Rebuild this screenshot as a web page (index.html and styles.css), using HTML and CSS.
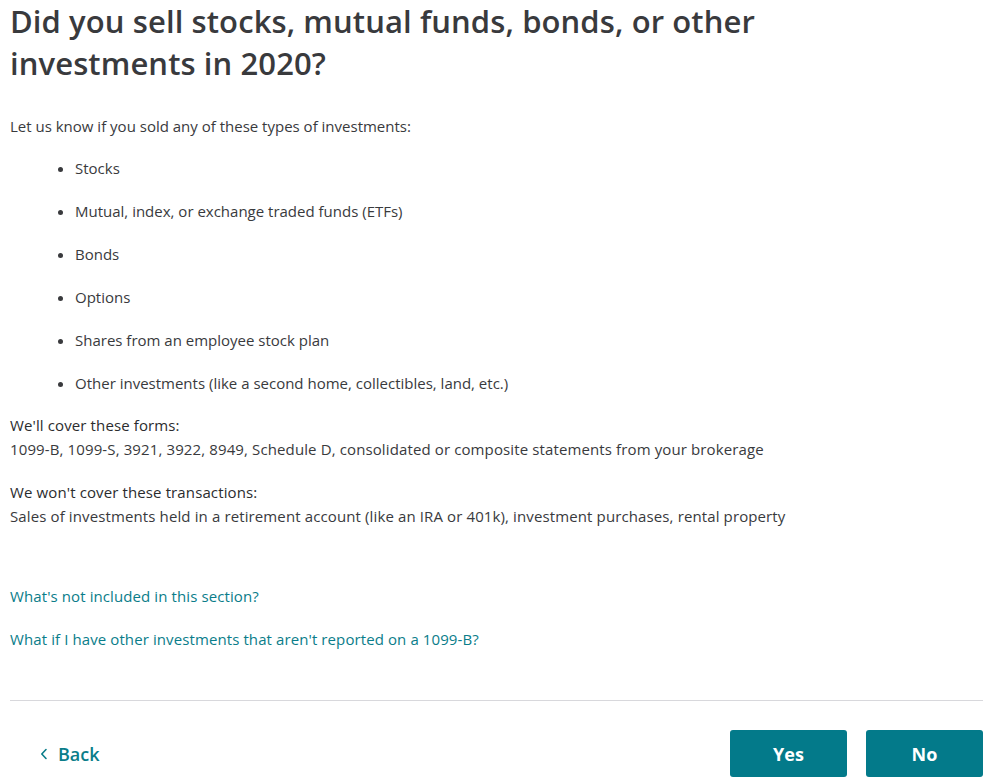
FILE: index.html
```html
<!DOCTYPE html>
<html>
<head>
<meta charset="utf-8">
<link rel="stylesheet" href="styles.css">
</head>
<body>
<main class="page">
  <h1 class="title">Did you sell stocks, mutual funds, bonds, or other investments in 2020?</h1>
  <p class="intro">Let us know if you sold any of these types of investments:</p>
  <ul class="types">
    <li>Stocks</li>
    <li>Mutual, index, or exchange traded funds (ETFs)</li>
    <li>Bonds</li>
    <li>Options</li>
    <li>Shares from an employee stock plan</li>
    <li>Other investments (like a second home, collectibles, land, etc.)</li>
  </ul>
  <div class="block">
    <div class="block-head">We'll cover these forms:</div>
    <div>1099-B, 1099-S, 3921, 3922, 8949, Schedule D, consolidated or composite statements from your brokerage</div>
  </div>
  <div class="block">
    <div class="block-head">We won't cover these transactions:</div>
    <div>Sales of investments held in a retirement account (like an IRA or 401k), investment purchases, rental property</div>
  </div>
  <div class="links">
    <a class="link" href="#">What's not included in this section?</a>
    <a class="link" href="#">What if I have other investments that aren't reported on a 1099-B?</a>
  </div>
  <div class="footer">
    <a class="back" href="#">
      <svg class="chev" width="8" height="12" viewBox="0 0 8 12"><path d="M6 1.5 L1.8 6 L6 10.5" fill="none" stroke="currentColor" stroke-width="1.6" stroke-linecap="round" stroke-linejoin="round"/></svg>
      <span>Back</span>
    </a>
    <div class="actions">
      <button class="btn">Yes</button>
      <button class="btn">No</button>
    </div>
  </div>
</main>
</body>
</html>
```
FILE: styles.css
```css
html, body { margin: 0; padding: 0; background: #fff; }
body { font-family: "Open Sans", sans-serif; color: #393a3d; }
.page { width: 973px; margin-left: 10px; }
.title { font-size: 31px; line-height: 42px; font-weight: 600; margin: 0; max-width: 800px; color: #393a3d; letter-spacing: 0.1px; }
.intro { font-size: 15px; line-height: 24px; margin: 30px 0 0; }
.types { list-style: disc; margin: 18px 0 0; padding-left: 65px; font-size: 15px; line-height: 24px; }
.types li { margin-top: 19px; }
.types li:first-child { margin-top: 12px; }
.block { font-size: 15px; line-height: 24px; margin-top: 19px; letter-spacing: 0.12px; }
.types + .block { margin-top: 18px; }
.block-head { color: #2b2c2e; }
.links { display: flex; flex-direction: column; gap: 19px; margin-top: 56px; font-size: 15px; line-height: 24px; letter-spacing: 0.1px; }
.link { color: #0a7d8a; text-decoration: none; }
.footer { border-top: 1px solid #d8d8dc; margin-top: 49px; display: flex; justify-content: space-between; align-items: center; padding-top: 29px; }
.back { display: flex; align-items: center; gap: 10px; color: #0a7d8a; text-decoration: none; font-size: 18px; font-weight: 600; margin-left: 30px; }
.actions { display: flex; gap: 19px; }
.btn { width: 117px; height: 47px; border: 0; border-radius: 3px; background: #037a8a; color: #fff; font-family: inherit; font-size: 18px; font-weight: 700; }
```
